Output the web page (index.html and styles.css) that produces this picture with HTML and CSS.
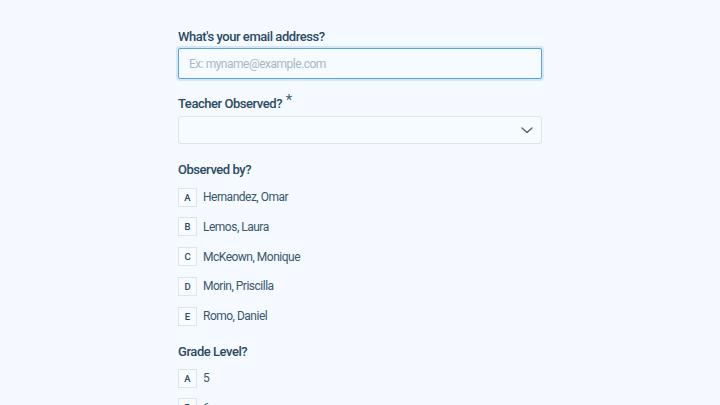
FILE: index.html
```html
<!DOCTYPE html>
<html>
<head>
<meta charset="utf-8">
<link rel="stylesheet" href="styles.css">
</head>
<body>
<div class="form">
  <div class="field f-email">
    <label class="label">What's your email address?</label>
    <input class="input focused" type="text" placeholder="Ex: myname@example.com">
  </div>
  <div class="field f-teacher">
    <label class="label">Teacher Observed? <span class="req">*</span></label>
    <div class="select">
      <svg class="chev" width="12" height="7" viewBox="0 0 12 7"><path d="M1 1 L6 5.5 L11 1" fill="none" stroke="#4a6378" stroke-width="1.3" stroke-linecap="round" stroke-linejoin="round"/></svg>
    </div>
  </div>
  <div class="field f-obs">
    <label class="label">Observed by?</label>
    <div class="options">
      <div class="opt"><span class="key">A</span><span class="txt">Hernandez, Omar</span></div>
      <div class="opt"><span class="key">B</span><span class="txt">Lemos, Laura</span></div>
      <div class="opt"><span class="key">C</span><span class="txt">McKeown, Monique</span></div>
      <div class="opt"><span class="key">D</span><span class="txt">Morin, Priscilla</span></div>
      <div class="opt"><span class="key">E</span><span class="txt">Romo, Daniel</span></div>
    </div>
  </div>
  <div class="field f-grade">
    <label class="label">Grade Level?</label>
    <div class="options">
      <div class="opt"><span class="key">A</span><span class="txt">5</span></div>
      <div class="opt"><span class="key">B</span><span class="txt">6</span></div>
    </div>
  </div>
</div>
</body>
</html>
```
FILE: styles.css
```css
html, body {
  margin: 0;
  padding: 0;
  background: #f4faff;
  height: 405px;
  overflow: hidden;
}
body {
  font-family: Roboto, "Liberation Sans", sans-serif;
  color: #2c4a62;
}
.form {
  width: 364px;
  margin: 0 0 0 178px;
  padding-top: 29px;
  display: flex;
  flex-direction: column;
}
.field {
  display: flex;
  flex-direction: column;
}
.f-teacher { margin-top: 16px; }
.f-obs { margin-top: 18px; }
.f-grade { margin-top: 18px; }
.label {
  font-size: 13px;
  font-weight: 500;
  line-height: 16px;
  height: 16px;
  margin-bottom: 3px;
  color: #2c4a62;
  letter-spacing: -0.45px;
}
.f-teacher .label { margin-bottom: 5px; }
.req {
  font-size: 15px;
  font-weight: 400;
  position: relative;
  top: -3px;
  margin-left: 1px;
  color: #4a6378;
}
.input {
  box-sizing: border-box;
  height: 31px;
  width: 364px;
  margin: 0;
  padding: 0 10px;
  font-family: Roboto, "Liberation Sans", sans-serif;
  font-size: 12px;
  letter-spacing: -0.5px;
  color: #2c4a62;
  background: #f6fbff;
  border: 1px solid #dae5ed;
  border-radius: 2px;
  outline: none;
}
.input::placeholder { color: #a6b8c6; }
.input.focused {
  border: 1px solid #5aa3de;
  box-shadow: 0 0 0 2px #d3e7f7;
}
.select {
  box-sizing: border-box;
  height: 28px;
  width: 364px;
  border: 1px solid #dae5ed;
  border-radius: 2px;
  background: #f6fbff;
  display: flex;
  align-items: center;
  justify-content: flex-end;
  padding-right: 8px;
}
.options {
  display: flex;
  flex-direction: column;
  gap: 10.75px;
  padding-top: 6.5px;
}
.f-grade .options { padding-top: 6px; }
.opt {
  display: flex;
  align-items: center;
  gap: 6px;
  height: 19px;
}
.key {
  box-sizing: border-box;
  width: 19px;
  height: 19px;
  border: 1px solid #dae5ed;
  background: #f8fcff;
  font-size: 9.5px;
  font-weight: 500;
  display: flex;
  align-items: center;
  justify-content: center;
  color: #2c4a62;
}
.txt {
  font-size: 12px;
  letter-spacing: -0.5px;
  color: #3a566c;
}
```
